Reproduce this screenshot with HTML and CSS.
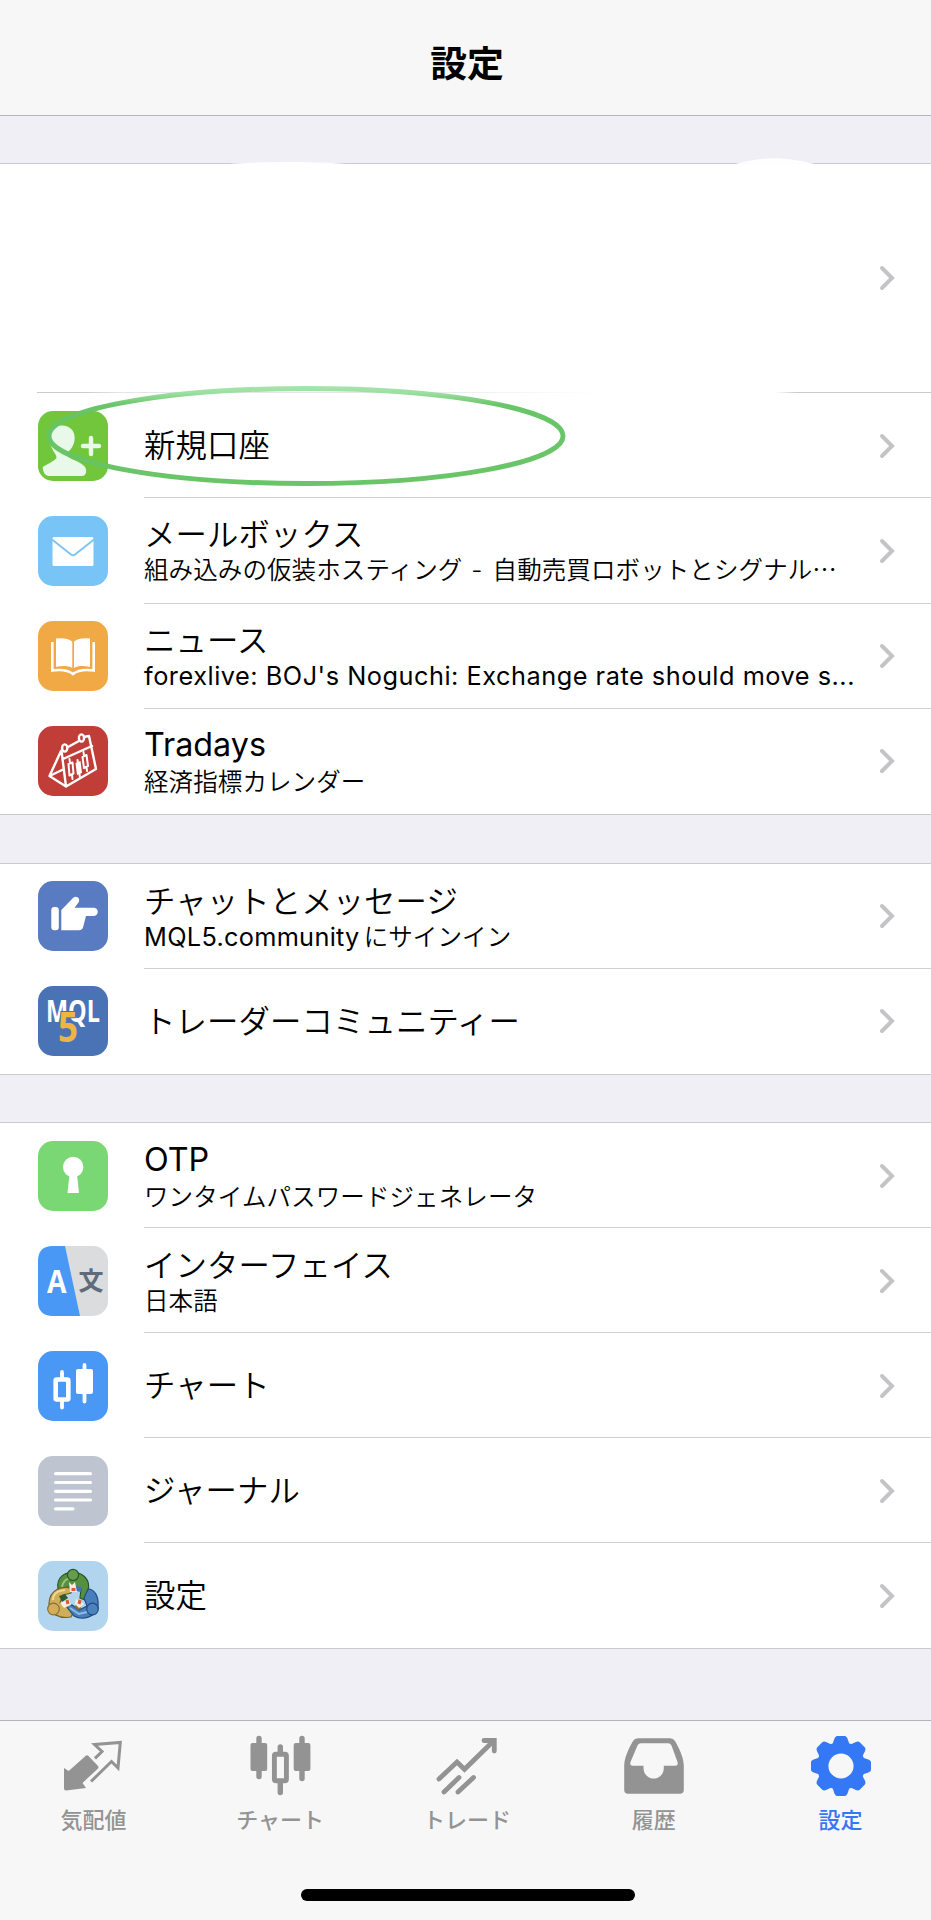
FILE: index.html
```html
<!doctype html>
<html lang="ja">
<head>
<meta charset="utf-8">
<title>設定</title>
<link rel="stylesheet" href="styles.css">
</head>
<body>

<header class="header"><h1>設定</h1></header>

<main class="main">

	<ul class="list list1">
		<li class="account">
			<svg class="arrow" viewBox="0 0 16 26"><path d="M3 3l10 10L3 23"/></svg>
		</li>
		<li class="item">
			<svg class="icon" viewBox="0 0 70 70">
				<rect width="70" height="70" rx="15" fill="#72c63c"/>
				<path d="M24 14.500C32 14.500 37 20 36.700 27.500C36.300 34 33.500 38 30 41V46C35 49 43 51 47 56C49 59 48.500 65 44 65H11C7 65 5 61 4.700 56C9 53 15 51 18.500 47C18.500 43 15 41 13 35C9 25 13 14.500 24 14.500Z" fill="#e8f9ea"/>
				<path d="M53 27v16M45 35h16" stroke="#e8f9ea" stroke-width="4.400" stroke-linecap="round"/>
			</svg>
			<div class="text"><p class="tit">新規口座</p></div>
			<svg class="arrow" viewBox="0 0 16 26"><path d="M3 3l10 10L3 23"/></svg>
		</li>
		<li class="item">
			<svg class="icon" viewBox="0 0 70 70">
				<rect width="70" height="70" rx="15" fill="#79c4f6"/>
				<rect x="14.500" y="21" width="41" height="29" rx="1.500" fill="#fff"/>
				<path d="M14 23.500L33 38.500Q35 40 37 38.500L56 23.500" fill="none" stroke="#79c4f6" stroke-width="1.800"/>
			</svg>
			<div class="text">
				<p class="tit">メールボックス</p>
				<p class="sub">組み込みの仮装ホスティング<span class="dash">-</span>自動売買ロボットとシグナル⋯</p>
			</div>
			<svg class="arrow" viewBox="0 0 16 26"><path d="M3 3l10 10L3 23"/></svg>
		</li>
		<li class="item">
			<svg class="icon" viewBox="0 0 70 70">
				<rect width="70" height="70" rx="15" fill="#f1a946"/>
				<path d="M18 17.500C24 16.500 31 17.500 34.300 20.500V47C30 44.500 24 44.500 18 46Z M36 20.500C39 17.500 46 16.500 52 17.500V46C46 44.500 40 44.500 36 47Z" fill="#fff"/>
				<path d="M14.300 21V49.500C22 48.500 30 49 35 53C40 49 48 48.500 55.700 49.500V21" fill="none" stroke="#fff" stroke-width="2.600"/>
			</svg>
			<div class="text">
				<p class="tit">ニュース</p>
				<p class="sub en">forexlive: BOJ's Noguchi: Exchange rate should move s...</p>
			</div>
			<svg class="arrow" viewBox="0 0 16 26"><path d="M3 3l10 10L3 23"/></svg>
		</li>
		<li class="item">
			<svg class="icon" viewBox="0 0 70 70">
				<rect width="70" height="70" rx="15" fill="#c13d38"/>
				<g fill="none" stroke="#fff" stroke-width="2.400" stroke-linejoin="round" stroke-linecap="round">
					<path d="M23.500 25L28 60.500L58 43L51 10L46 11M23 25L11.500 50L28 60.500M11.500 50L25 43.500M25 33L54 20M30 21L40 15.500"/>
					<ellipse cx="26.700" cy="22" rx="2.600" ry="3.600"/>
					<ellipse cx="43.500" cy="12" rx="2.600" ry="3.600"/>
					<path d="M30.500 38l4-1.500l1 11l-4 2zM44.500 31l4-2l1.500 11l-4 2zM32 37l-.5-4M34 49l.5 4M46 30l-.5-4M48.500 41l.5 4M39.500 34l2.500 18" stroke-width="2"/>
				</g>
				<path d="M37.500 37l5-2l1.500 12l-5 2z" fill="#fff"/>
			</svg>
			<div class="text">
				<p class="tit en">Tradays</p>
				<p class="sub">経済指標カレンダー</p>
			</div>
			<svg class="arrow" viewBox="0 0 16 26"><path d="M3 3l10 10L3 23"/></svg>
		</li>

		<!-- 手書きの丸 -->
		<svg class="mark" viewBox="0 0 931 360">
			<path d="M222 10C245 6 330 6 355 10ZM732 10C762 1 786 1 818 10Z" fill="#fff"/>
			<defs>
				<linearGradient id="pen" gradientUnits="userSpaceOnUse" x1="0" y1="231" x2="0" y2="250">
					<stop offset="0" stop-color="#a5e5aa"/>
					<stop offset=".35" stop-color="#99df9f"/>
					<stop offset="1" stop-color="#66c465"/>
				</linearGradient>
			</defs>
			<ellipse cx="306" cy="281" rx="257" ry="47.500" fill="none" stroke="url(#pen)" stroke-width="5"/>
		</svg>
	</ul>

	<ul class="list">
		<li class="item">
			<svg class="icon" viewBox="0 0 70 70">
				<rect width="70" height="70" rx="15" fill="#587bc1"/>
				<rect x="13.300" y="26" width="7.500" height="23.300" rx="3" fill="#fff"/>
				<path d="M23.300 29L35.500 16.500C38.500 14 43 17.500 40.500 21.500L36.500 26.700H56C61 27 61 34.500 56 35H48L45 46.500Q44 49.300 41 49.300H23.300Z" fill="#fff"/>
			</svg>
			<div class="text">
				<p class="tit">チャットとメッセージ</p>
				<p class="sub"><span class="en">MQL5.community</span>にサインイン</p>
			</div>
			<svg class="arrow" viewBox="0 0 16 26"><path d="M3 3l10 10L3 23"/></svg>
		</li>
		<li class="item">
			<svg class="icon" viewBox="0 0 70 70">
				<rect width="70" height="70" rx="15" fill="#4a73b6"/>
				<g class="mql">
					<text x="8" y="35.500" textLength="54" lengthAdjust="spacingAndGlyphs" font-size="31" fill="#fff">MQL</text>
					<text x="20" y="56" textLength="20" lengthAdjust="spacingAndGlyphs" font-size="41" fill="#efb544" stroke="#4a73b6" stroke-width="2" paint-order="stroke">5</text>
				</g>
			</svg>
			<div class="text"><p class="tit">トレーダーコミュニティー</p></div>
			<svg class="arrow" viewBox="0 0 16 26"><path d="M3 3l10 10L3 23"/></svg>
		</li>
	</ul>

	<ul class="list">
		<li class="item">
			<svg class="icon" viewBox="0 0 70 70">
				<rect width="70" height="70" rx="15" fill="#79d774"/>
				<circle cx="35.200" cy="26" r="10.200" fill="#fff"/>
				<path d="M31.500 33h7.500l2 19H29.500z" fill="#fff"/>
			</svg>
			<div class="text">
				<p class="tit en">OTP</p>
				<p class="sub">ワンタイムパスワードジェネレータ</p>
			</div>
			<svg class="arrow" viewBox="0 0 16 26"><path d="M3 3l10 10L3 23"/></svg>
		</li>
		<li class="item">
			<svg class="icon" viewBox="0 0 70 70">
				<rect width="70" height="70" rx="15" fill="#dadcde"/>
				<path d="M15 0H27L42 70H15Q0 70 0 55V15Q0 0 15 0Z" fill="#4a98f6"/>
				<text class="a" x="9" y="47" textLength="19.500" lengthAdjust="spacingAndGlyphs">A</text>
				<text class="bun" x="40.500" y="44">文</text>
			</svg>
			<div class="text">
				<p class="tit">インターフェイス</p>
				<p class="sub">日本語</p>
			</div>
			<svg class="arrow" viewBox="0 0 16 26"><path d="M3 3l10 10L3 23"/></svg>
		</li>
		<li class="item">
			<svg class="icon" viewBox="0 0 70 70">
				<rect width="70" height="70" rx="15" fill="#4a98f6"/>
				<path d="M24 21v6M24 50v6.500M46.500 14v36.500" stroke="#fff" stroke-width="3.800" stroke-linecap="round"/>
				<rect x="17.700" y="28.500" width="12.600" height="20" rx="1" fill="none" stroke="#fff" stroke-width="4.600"/>
				<rect x="38" y="18" width="17" height="25" rx="2" fill="#fff"/>
			</svg>
			<div class="text"><p class="tit">チャート</p></div>
			<svg class="arrow" viewBox="0 0 16 26"><path d="M3 3l10 10L3 23"/></svg>
		</li>
		<li class="item">
			<svg class="icon" viewBox="0 0 70 70">
				<rect width="70" height="70" rx="15" fill="#bec4d0"/>
				<path d="M17.500 17.700h35M17.500 26.500h35M17.500 35.300h35M17.500 44h35M17.500 52.800h17.500" stroke="#fff" stroke-width="3.200" stroke-linecap="round"/>
			</svg>
			<div class="text"><p class="tit">ジャーナル</p></div>
			<svg class="arrow" viewBox="0 0 16 26"><path d="M3 3l10 10L3 23"/></svg>
		</li>
		<li class="item">
			<svg class="icon" viewBox="0 0 70 70">
				<rect width="70" height="70" rx="15" fill="#b1d5ee"/>
				<g stroke-width="1.200">
					<path d="M20 28C18 16 27 11 35 12C45 11 53 19 50 30L47 39L42 37L43 28L37 25L25 27Z" fill="#55903e" stroke="#2c5525"/>
					<path d="M24 26C26 17 32 16 36 20" fill="none" stroke="#9ac47a" stroke-width="2"/>
					<path d="M33 27C24 25 12 28 11 42C10 53 22 58 33 56L36 50L30 46L22 42L25 34L33 32Z" fill="#cfae5a" stroke="#73602d"/>
					<path d="M15 39C15 31 21 30 27 29" fill="none" stroke="#efd890" stroke-width="2"/>
					<path d="M46 37L50 28C57 28 61 36 60 46C57 56 45 60 36 55L28 45L34 44L41 49L49 45Z" fill="#477fbd" stroke="#234b82"/>
					<path d="M32 47L41 53L49 51" fill="none" stroke="#8fbbe5" stroke-width="2"/>
					<circle cx="35" cy="14" r="5.600" fill="#659d4c" stroke="#2c5525"/>
					<circle cx="15.500" cy="48" r="5.800" fill="#d2ae58" stroke="#8a7032"/>
					<circle cx="54.500" cy="48" r="5.800" fill="#4b84bd" stroke="#234b82"/>
					<path d="M38 25l5 1v5l-5-1z" fill="#3976c2"/>
					<path d="M21 35l6-2 3 4-6 4z" fill="#30582d"/>
					<path d="M36 45l6-2 1 5-3 1z" fill="#88702f"/>
				</g>
				<path d="M31 21l3 3 3-3 2 10h-7zM22 42l9-4 2 6-7 3zM38 38l8 5-5 4-4-4z" fill="#f4eee2"/>
				<path d="M33.500 27h4v3h-4zM27.500 39.500l3-1 1 4-3 1zM40.500 38.500l3 1-1 4-3-1z" fill="#d95b31"/>
			</svg>
			<div class="text"><p class="tit">設定</p></div>
			<svg class="arrow" viewBox="0 0 16 26"><path d="M3 3l10 10L3 23"/></svg>
		</li>
	</ul>

</main>

<nav class="tab">
	<ul>
		<li>
			<svg viewBox="0 0 64 64">
				<path d="M3 34L7.700 37L24.500 22Q26 20.500 27.500 22L37 32Q38 33.500 37 34.500L21.500 49L25 54L5 56.500Q3 56.500 3 54.500Z" fill="#939393"/>
				<path d="M34 24.300L41 17.500L33.500 10.500L59.300 8.500L57 34L50.500 27.500L30 47.500" fill="none" stroke="#939393" stroke-width="3"/>
			</svg>
			<span>気配値</span>
		</li>
		<li>
			<svg viewBox="0 0 64 64">
				<path d="M11 4.500v38M54 4.500v40M32.300 13v6M32.300 48v10.500" stroke="#939393" stroke-width="5.400" stroke-linecap="round"/>
				<rect x="2.500" y="9" width="16.700" height="28" rx="2" fill="#939393"/>
				<rect x="45.700" y="9" width="16.700" height="28" rx="2" fill="#939393"/>
				<rect x="26.400" y="20.300" width="12" height="26.400" rx="1.500" fill="none" stroke="#939393" stroke-width="4.900"/>
			</svg>
			<span>チャート</span>
		</li>
		<li>
			<svg viewBox="0 0 64 64">
				<path d="M4 45L22 28L29.500 35.300L59 6.500M49 6.500H59.300V17" fill="none" stroke="#939393" stroke-width="4.800" stroke-linecap="round"/>
				<path d="M9 58L24 43.500M23 58L38.500 43.500" stroke="#939393" stroke-width="4.800" stroke-linecap="round"/>
			</svg>
			<span>トレード</span>
		</li>
		<li>
			<svg viewBox="0 0 64 64">
				<path fill-rule="evenodd" d="M16 4.300H48Q51.500 4.300 53 7C58 16 61.800 24 61.800 32V56Q61.800 59.700 58 59.700H6Q2.200 59.700 2.200 56V32C2.200 24 6 16 11 7Q12.500 4.300 16 4.300ZM19 9.300Q16.500 9.300 15.500 11.500L8.500 28Q7.500 31.700 11 31.700H21.500V34C21.500 40 26 44.600 31.700 44.600C37.500 44.600 41.800 40 41.800 34V31.700H53Q56.500 31.700 55.500 28L49.500 11.500Q48.500 9.300 46 9.300Z" fill="#939393"/>
			</svg>
			<span>履歴</span>
		</li>
		<li class="on">
			<svg viewBox="0 0 64 64">
				<defs><path id="tooth" d="M-9 -21C-7 -24 -7 -30 -3.500 -30H3.500C7 -30 7 -24 9 -21Z"/></defs>
				<g transform="translate(32 32)" fill="#3478f6">
					<circle r="18.300" fill="none" stroke="#3478f6" stroke-width="11.500"/>
					<use href="#tooth"/>
					<use href="#tooth" transform="rotate(45)"/>
					<use href="#tooth" transform="rotate(90)"/>
					<use href="#tooth" transform="rotate(135)"/>
					<use href="#tooth" transform="rotate(180)"/>
					<use href="#tooth" transform="rotate(225)"/>
					<use href="#tooth" transform="rotate(270)"/>
					<use href="#tooth" transform="rotate(315)"/>
				</g>
			</svg>
			<span>設定</span>
		</li>
	</ul>
	<div class="bar"></div>
</nav>

</body>
</html>
```

FILE: styles.css
```css
body,ul,h1,p {margin:0;padding:0;}
ul {list-style:none;}
svg {display:block;}

body {
	display:flex;
	flex-direction:column;
	height:1920px;
	overflow:hidden;
	background:#f0eff5;
	color:#000;
	font-family:"Noto Sans CJK JP", sans-serif;
}

/* header */

.header {
	box-sizing:border-box;
	height:116px;
	padding:34px 0 0 3px;
	background:#f7f7f7;
	border-bottom:1px solid #b4b4ba;
	text-align:center;
}

.header h1 {
	font-size:36.800px;
	line-height:54px;
	font-weight:700;
}

/* list */

.main {
	flex:1;
	display:flex;
	flex-direction:column;
	gap:47.500px;
	padding-top:47px;
}

.list {
	background:#fff;
	border-top:1px solid #cbcbcf;
	border-bottom:1px solid #cbcbcf;
}

.list1 {position:relative;}

.account {
	display:flex;
	align-items:center;
	justify-content:flex-end;
	box-sizing:border-box;
	height:229px;
	padding-right:36px;
	border-bottom:1px solid;
	border-image:linear-gradient(to right, #fff 38px, #cbcbcf 38px, #cbcbcf 85px, #e6e6e8 120px, #e6e6e8 400px, #fff 600px, #fff 775px, #cbcbcf 795px) 1;
}

.item {
	display:flex;
	align-items:center;
	height:105px;
	padding:0 36px 0 38px;
	position:relative;
}

.list1 .item {height:105.250px;}

/* 区切り線は文字の左端から */
.item + .item:before {
	content:"";
	position:absolute;
	left:144px; right:0; top:-1px;
	height:1px;
	background:#d0d0d3;
}

.icon {
	flex:none;
	width:70px; height:70px;
}

.text {
	flex:1;
	margin:-3px 0 0 36px;
	min-width:0;
	white-space:nowrap;
}

.tit {
	font-size:31.400px;
	line-height:36px;
	letter-spacing:0.100px;
	font-weight:350;
}

.sub {
	margin-bottom:-5px;
	font-size:24.500px;
	line-height:35px;
	letter-spacing:0.100px;
	font-weight:350;
}

.en {font-family:Inter, "Noto Sans CJK JP", sans-serif; font-weight:400;}
.tit.en {font-size:32.300px; line-height:37px; letter-spacing:0;}
.sub.en {padding-top:1px; font-size:25.300px; letter-spacing:0.520px;}
.sub .en {margin-right:4px; font-size:25.300px; line-height:30px; letter-spacing:0.300px;}
.dash {margin:0 10px 0 9px; font-family:Inter, sans-serif;}

.arrow {
	flex:none;
	width:16px; height:26px;
}

.arrow path {
	fill:none;
	stroke:#c4c4c6;
	stroke-width:4;
	stroke-linecap:round;
}

.mark {
	position:absolute;
	left:0; top:-9px;
	width:931px; height:360px;
	opacity:0.97;
}

.mql {font-family:"Open Sans", sans-serif; font-weight:700;}
.a {font-family:"Open Sans", sans-serif; font-weight:700; font-size:32px; fill:#fff;}
.bun {font-weight:700; font-size:25px; fill:#5f6b7a;}

/* tab */

.tab {
	box-sizing:border-box;
	height:200px;
	padding-top:13px;
	background:#f7f7f7;
	border-top:1px solid #b4b4ba;
}

.tab ul {
	display:grid;
	grid-template-columns:repeat(5, 1fr);
	margin-right:-3px;
}

.tab li {
	display:flex;
	flex-direction:column;
	align-items:center;
	color:#939393;
	font-size:22px;
	line-height:32px;
	font-weight:500;
}

.tab li svg {width:64px; height:64px; margin-bottom:4px;}
.tab .on {color:#3478f6;}

.bar {
	width:334px; height:12px;
	margin:55px 0 0 301px;
	border-radius:6px;
	background:#000;
}
```
